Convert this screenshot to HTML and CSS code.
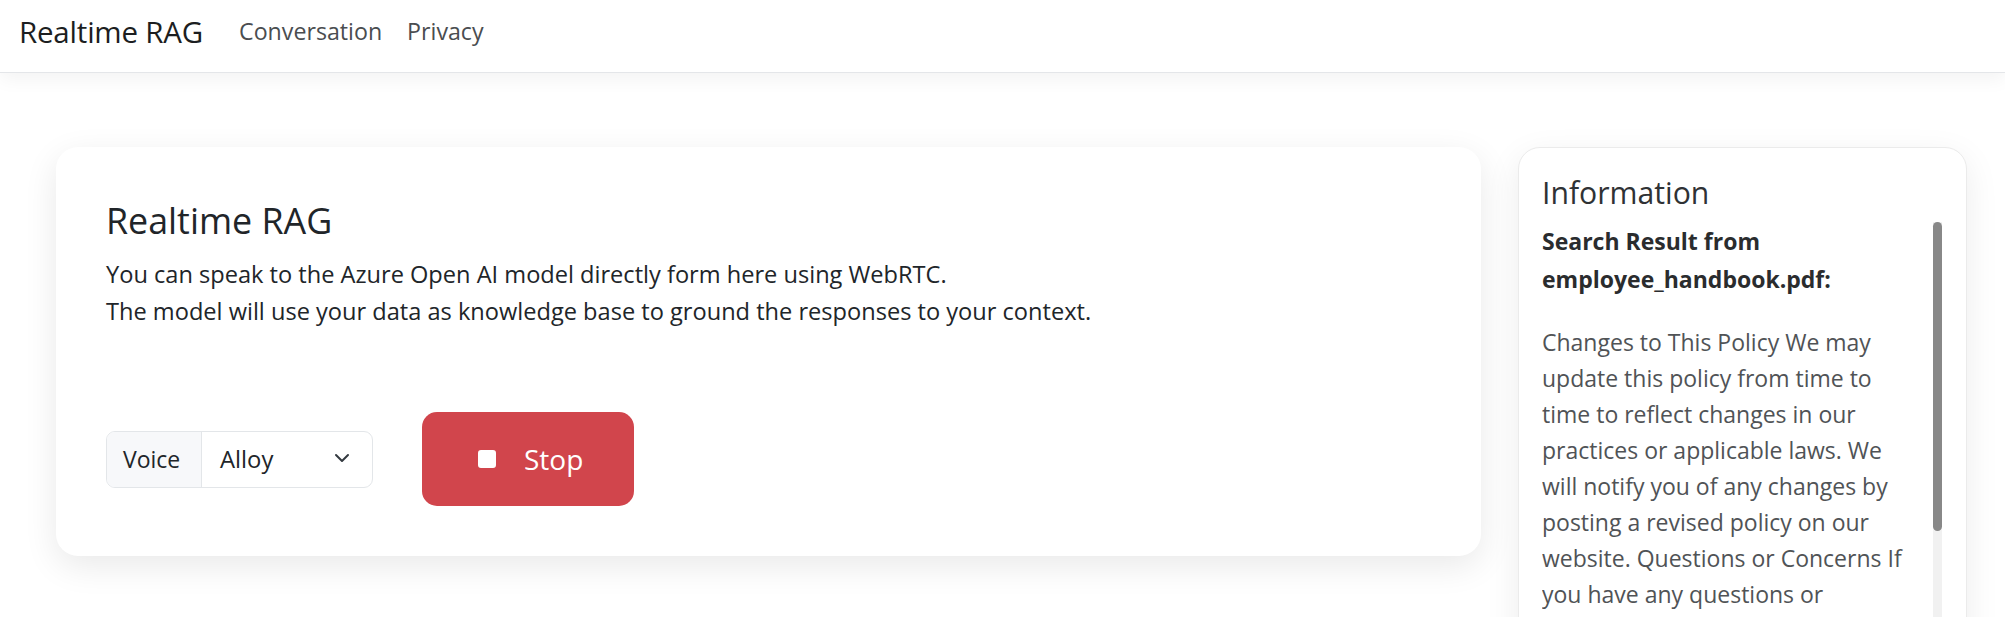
FILE: index.html
```html
<!DOCTYPE html>
<html lang="en">
<head>
<meta charset="utf-8">
<title>Realtime RAG</title>
<link rel="stylesheet" href="styles.css">
</head>
<body>
<header class="navbar">
  <a class="brand" href="#">Realtime RAG</a>
  <nav class="nav">
    <a class="nav-link" href="#">Conversation</a>
    <a class="nav-link" href="#">Privacy</a>
  </nav>
</header>
<main class="layout">
  <section class="main-card">
    <h1 class="card-title">Realtime RAG</h1>
    <p class="lead-text">You can speak to the Azure Open AI model directly form here using WebRTC.<br>The model will use your data as knowledge base to ground the responses to your context.</p>
    <div class="controls">
      <div class="input-group">
        <span class="input-label">Voice</span>
        <div class="select">
          <span class="select-value">Alloy</span>
          <svg class="chevron" width="16" height="16" viewBox="0 0 16 16"><path d="M2 5l6 6 6-6" fill="none" stroke="#343a40" stroke-width="2" stroke-linecap="round" stroke-linejoin="round"/></svg>
        </div>
      </div>
      <button class="btn-stop" type="button">
        <svg class="stop-icon" width="32" height="32" viewBox="0 0 16 16"><path d="M5 3.5h6A1.5 1.5 0 0 1 12.5 5v6a1.5 1.5 0 0 1-1.5 1.5H5A1.5 1.5 0 0 1 3.5 11V5A1.5 1.5 0 0 1 5 3.5" fill="#fff"/></svg>
        <span>Stop</span>
      </button>
    </div>
  </section>
  <aside class="info-card">
    <h2 class="info-title">Information</h2>
    <div class="info-scroll">
      <div class="info-content">
        <div class="result-title">Search Result from<br>employee_handbook.pdf:</div>
        <p class="result-text">Changes to This Policy We may<br>update this policy from time to<br>time to reflect changes in our<br>practices or applicable laws. We<br>will notify you of any changes by<br>posting a revised policy on our<br>website. Questions or Concerns If<br>you have any questions or<br>concerns about this policy, please<br>contact the HR department.</p>
      </div>
      <div class="scrollbar"><div class="scroll-thumb"></div></div>
    </div>
  </aside>
</main>
</body>
</html>
```
FILE: styles.css
```css
* { box-sizing: border-box; }
html, body { margin: 0; padding: 0; }
body {
  font-family: "Open Sans", "Noto Sans", sans-serif;
  color: #212529;
  background: #ffffff;
  height: 617px;
  overflow: hidden;
}
.navbar {
  height: 73px;
  display: flex;
  align-items: center;
  padding: 0 0 10px 19px;
  background: #fff;
  border-bottom: 1px solid #e4e6e9;
  box-shadow: 0 6px 18px rgba(0, 0, 0, 0.05);
  position: relative;
  z-index: 2;
}
.brand {
  font-size: 29.5px;
  color: #1c1e21;
  text-decoration: none;
  margin-right: 36px;
  letter-spacing: -0.2px;
}
.nav { display: flex; gap: 25px; }
.nav-link {
  font-size: 23.2px;
  color: #4a4d50;
  text-decoration: none;
}
.layout {
  display: flex;
  align-items: flex-start;
  gap: 37px;
  padding: 74px 0 0 56px;
}
.main-card {
  width: 1425px;
  height: 409px;
  background: #fff;
  border-radius: 22px;
  box-shadow: 0 10px 34px rgba(0, 0, 0, 0.09);
  padding: 52px 50px 0 50px;
}
.card-title {
  margin: 0 0 14px 0;
  font-size: 35.8px;
  font-weight: 500;
  line-height: 43px;
  color: #212529;
}
.lead-text {
  margin: 0;
  font-size: 23.6px;
  line-height: 37px;
  color: #212529;
}
.controls {
  display: flex;
  align-items: center;
  gap: 49px;
  margin-top: 82px;
}
.input-group {
  display: flex;
  height: 57px;
  width: 267px;
  border: 1px solid #e3e6e9;
  border-radius: 9px;
  overflow: hidden;
}
.input-label {
  width: 95px;
  display: flex;
  align-items: center;
  padding-left: 16px;
  background: #f7f8fa;
  border-right: 1px solid #e3e6e9;
  font-size: 23px;
  color: #212529;
}
.select {
  flex: 1;
  display: flex;
  align-items: center;
  justify-content: space-between;
  padding: 0 22px 0 18px;
  font-size: 23.8px;
  color: #212529;
}
.chevron { display: block; margin-top: -2px; }
.btn-stop {
  width: 212px;
  height: 94px;
  display: flex;
  align-items: center;
  gap: 21px;
  padding: 0 0 0 49px;
  border: none;
  border-radius: 15px;
  background: #d1454c;
  color: #fff;
  font-family: "Open Sans", "Noto Sans", sans-serif;
  font-size: 28px;
}
.stop-icon { display: block; }
.info-card {
  width: 449px;
  height: 520px;
  background: #fff;
  border: 1px solid #ebebeb;
  border-radius: 22px;
  box-shadow: 0 10px 34px rgba(0, 0, 0, 0.08);
  padding: 27px 24px 0 23px;
}
.info-title {
  margin: 0 0 11px 0;
  font-size: 30.2px;
  font-weight: 500;
  line-height: 36px;
  color: #2f3235;
}
.info-scroll {
  height: 400px;
  display: flex;
}
.info-content {
  flex: 1;
  min-width: 0;
  overflow: hidden;
}
.scrollbar {
  width: 9px;
  background: #f1f1f1;
}
.scroll-thumb {
  height: 309px;
  background: #888;
  border-radius: 5px;
}
.result-title {
  font-size: 23px;
  font-weight: 700;
  line-height: 38px;
  color: #2a2c2e;
  white-space: nowrap;
}
.result-text {
  margin: 26px 0 0 0;
  font-size: 23px;
  line-height: 36px;
  color: #505356;
  white-space: nowrap;
}
```
